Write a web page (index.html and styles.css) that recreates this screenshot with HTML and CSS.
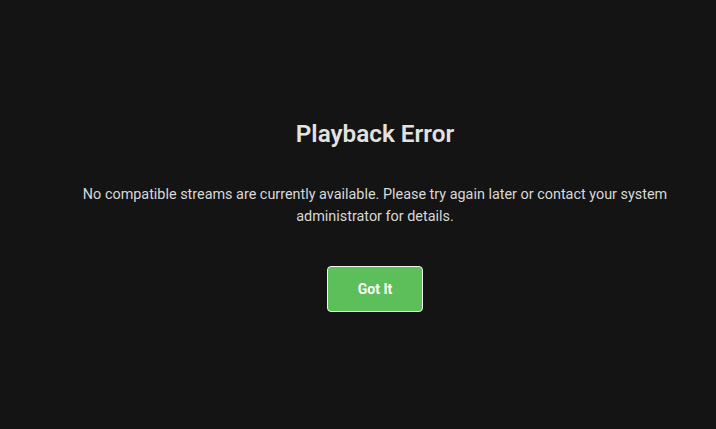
FILE: index.html
```html
<!DOCTYPE html>
<html>
<head>
<meta charset="utf-8">
<link rel="stylesheet" href="styles.css">
</head>
<body>
<div class="dialog">
  <h1 class="title">Playback Error</h1>
  <p class="message">No compatible streams are currently available. Please try again later or contact your system administrator for details.</p>
  <button class="btn">Got It</button>
</div>
</body>
</html>
```

FILE: styles.css
```css
html, body {
  margin: 0;
  padding: 0;
  height: 100%;
  background: #141414;
}
body {
  font-family: Roboto, "Liberation Sans", sans-serif;
}
.dialog {
  box-sizing: border-box;
  display: flex;
  flex-direction: column;
  align-items: center;
  padding: 120px 0 0 34px;
  text-align: center;
}
.title {
  margin: 0;
  font-size: 24.3px;
  line-height: 28px;
  font-weight: 600;
  color: #e2e2e2;
}
.message {
  margin: 36px 0 0;
  max-width: 600px;
  font-size: 14.4px;
  line-height: 22px;
  color: #d8d8d8;
}
.btn {
  margin-top: 38px;
  box-sizing: border-box;
  width: 96px;
  height: 46px;
  background: #5cbf5a;
  border: 1px solid #f2f2f2;
  border-radius: 4px;
  color: #ffffff;
  font-family: Roboto, "Liberation Sans", sans-serif;
  font-size: 14px;
  font-weight: 700;
  padding: 0;
}
```
